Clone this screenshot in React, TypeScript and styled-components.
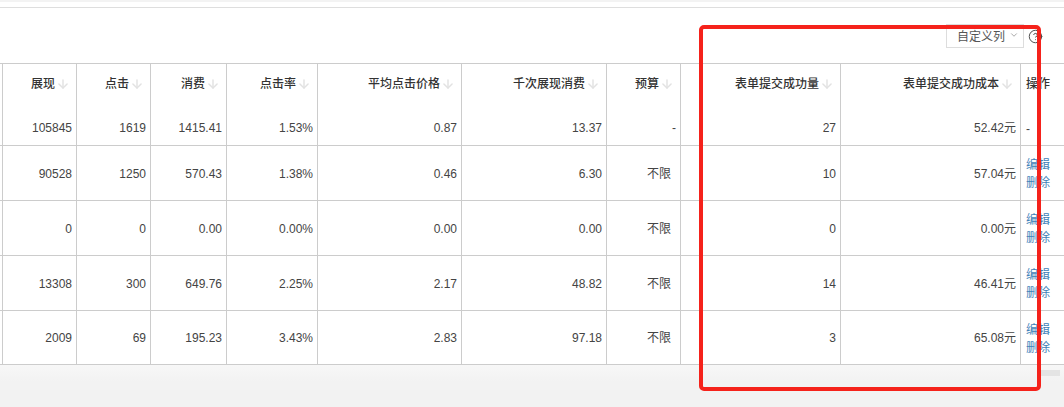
import React from "react";
import styled, { createGlobalStyle } from "styled-components";
import { ArrowDown, ChevronDown, CircleHelp } from "lucide-react";

const lineColor = "#cccccc";

const GlobalStyle = createGlobalStyle`
    html, body {
        margin: 0;
        padding: 0;
        background: #ffffff;
        overflow: hidden;
    }
    body {
        font-family: "Liberation Sans", "Noto Sans CJK SC", sans-serif;
        font-size: 12px;
        color: #444444;
    }
`;

const Page = styled.div`
    position: relative;
    width: 1064px;
    height: 407px;
    overflow: hidden;
    background: #ffffff;
`;

const TopBand = styled.div`
    height: 2px;
    background: #f3f3f3;
`;

const Panel = styled.div`
    margin-top: 5px;
    border-top: 1px solid #dedede;
`;

const Toolbar = styled.div`
    display: flex;
    justify-content: flex-end;
    align-items: center;
    gap: 4px;
    height: 55px;
    padding: 16px 21px 15px 0;
    box-sizing: border-box;
`;

const ColumnSelect = styled.div`
    display: flex;
    align-items: center;
    justify-content: space-between;
    box-sizing: border-box;
    width: 78px;
    height: 24px;
    padding: 0 4px 2px 10px;
    border: 1px solid #dddddd;
    font-size: 12px;
    color: #555555;
    svg {
        color: #999999;
        flex: none;
    }
`;

const HelpIcon = styled(CircleHelp)`
    color: #444444;
    flex: none;
`;

const Table = styled.table`
    width: 1064px;
    table-layout: fixed;
    border-collapse: separate;
    border-spacing: 0;
`;

const HeadCell = styled.th<{ $plain?: boolean }>`
    box-sizing: border-box;
    height: 47px;
    padding: ${(p) => (p.$plain ? "11px 0 0 5px" : "11px 6px 0 0")};
    vertical-align: top;
    text-align: ${(p) => (p.$plain ? "left" : "right")};
    font-weight: 500;
    font-size: 12px;
    line-height: 18px;
    color: #333333;
    white-space: nowrap;
    border-top: 1px solid ${lineColor};
    border-right: 1px solid ${lineColor};
    &:last-child {
        border-right: none;
    }
    svg {
        vertical-align: -3px;
        margin-left: 1px;
        color: #e2e2e2;
    }
`;

const BodyRow = styled.tr<{ $height: number }>`
    height: ${(p) => p.$height}px;
`;

const Cell = styled.td<{ $wide?: boolean }>`
    box-sizing: border-box;
    padding: 1px ${(p) => (p.$wide ? 9 : 4)}px 0 0;
    text-align: right;
    font-size: 12px;
    line-height: 18px;
    color: #444444;
    white-space: nowrap;
    border-right: 1px solid ${lineColor};
    border-bottom: 1px solid ${lineColor};
`;

const ActionCell = styled.td`
    box-sizing: border-box;
    padding: 2px 0 0 5px;
    font-size: 12px;
    line-height: 18px;
    color: #444444;
    border-bottom: 1px solid ${lineColor};
`;

const ActionLink = styled.a`
    display: block;
    color: #3f82b8;
    text-decoration: none;
`;

const Footer = styled.div`
    display: flex;
    justify-content: flex-end;
    height: 42px;
    padding: 5px 4px 0 0;
    box-sizing: border-box;
    background: linear-gradient(#f7f7f7, #f2f2f2 40%);
`;

const ScrollThumb = styled.div`
    width: 20px;
    height: 6px;
    background: #e4e4e4;
`;

const Highlight = styled.div`
    position: absolute;
    left: 699px;
    top: 25px;
    width: 342px;
    height: 366px;
    box-sizing: border-box;
    border: 4px solid #f5221b;
    border-radius: 5px;
    pointer-events: none;
`;

const columnWidths = [3, 74, 74, 76, 91, 144, 145, 74, 160, 180, 43];

const headers = [
    "展现",
    "点击",
    "消费",
    "点击率",
    "平均点击价格",
    "千次展现消费",
    "预算",
    "表单提交成功量",
    "表单提交成功成本",
];

const rows = [
    { height: 36, values: ["105845", "1619", "1415.41", "1.53%", "0.87", "13.37", "-", "27", "52.42元"], actions: false },
    { height: 55, values: ["90528", "1250", "570.43", "1.38%", "0.46", "6.30", "不限", "10", "57.04元"], actions: true },
    { height: 55, values: ["0", "0", "0.00", "0.00%", "0.00", "0.00", "不限", "0", "0.00元"], actions: true },
    { height: 55, values: ["13308", "300", "649.76", "2.25%", "2.17", "48.82", "不限", "14", "46.41元"], actions: true },
    { height: 54, values: ["2009", "69", "195.23", "3.43%", "2.83", "97.18", "不限", "3", "65.08元"], actions: true },
];

const App: React.FC = () => {
    return (
        <Page>
            <GlobalStyle />
            <TopBand />
            <Panel>
                <Toolbar>
                    <ColumnSelect>
                        自定义列
                        <ChevronDown size={10} />
                    </ColumnSelect>
                    <HelpIcon size={15} strokeWidth={1.5} />
                </Toolbar>
                <Table>
                    <colgroup>
                        {columnWidths.map((w, i) => (
                            <col key={i} style={{ width: w }} />
                        ))}
                    </colgroup>
                    <thead>
                        <tr>
                            <HeadCell />
                            {headers.map((h) => (
                                <HeadCell key={h}>
                                    {h}
                                    <ArrowDown size={14} strokeWidth={2.5} />
                                </HeadCell>
                            ))}
                            <HeadCell $plain>操作</HeadCell>
                        </tr>
                    </thead>
                    <tbody>
                        {rows.map((row, r) => (
                            <BodyRow key={r} $height={row.height}>
                                <Cell />
                                {row.values.map((v, i) => (
                                    <Cell key={i} $wide={v === "不限"}>
                                        {v}
                                    </Cell>
                                ))}
                                <ActionCell>
                                    {row.actions ? (
                                        <>
                                            <ActionLink href="#">编辑</ActionLink>
                                            <ActionLink href="#">删除</ActionLink>
                                        </>
                                    ) : (
                                        "-"
                                    )}
                                </ActionCell>
                            </BodyRow>
                        ))}
                    </tbody>
                </Table>
            </Panel>
            <Footer>
                <ScrollThumb />
            </Footer>
            <Highlight />
        </Page>
    );
};

export default App;
